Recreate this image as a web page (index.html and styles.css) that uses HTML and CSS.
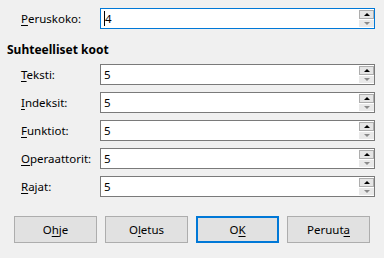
FILE: index.html
```html
<!DOCTYPE html>
<html lang="fi">
<head>
    <meta charset="UTF-8">
    <title>Fonttikoot</title>
    <link rel="stylesheet" href="styles.css">
</head>
<body>
    <div class="dialog">
        <div class="row">
            <label class="label"><u>P</u>eruskoko:</label>
            <div class="spin focused">
                <span class="caret"></span><span class="value">4</span>
                <div class="arrows"><span class="up"></span><span class="down"></span></div>
            </div>
        </div>

        <h3 class="section">Suhteelliset koot</h3>

        <div class="rows">
            <div class="row">
                <label class="label"><u>T</u>eksti:</label>
                <div class="spin"><span class="value">5</span>
                    <div class="arrows"><span class="up"></span><span class="down"></span></div>
                </div>
            </div>
            <div class="row">
                <label class="label"><u>I</u>ndeksit:</label>
                <div class="spin"><span class="value">5</span>
                    <div class="arrows"><span class="up"></span><span class="down"></span></div>
                </div>
            </div>
            <div class="row">
                <label class="label"><u>F</u>unktiot:</label>
                <div class="spin"><span class="value">5</span>
                    <div class="arrows"><span class="up"></span><span class="down"></span></div>
                </div>
            </div>
            <div class="row">
                <label class="label"><u>O</u>peraattorit:</label>
                <div class="spin"><span class="value">5</span>
                    <div class="arrows"><span class="up"></span><span class="down"></span></div>
                </div>
            </div>
            <div class="row">
                <label class="label"><u>R</u>ajat:</label>
                <div class="spin"><span class="value">5</span>
                    <div class="arrows"><span class="up"></span><span class="down"></span></div>
                </div>
            </div>
        </div>

        <div class="buttons">
            <button class="btn">O<u>h</u>je</button>
            <button class="btn">O<u>l</u>etus</button>
            <button class="btn default">O<u>K</u></button>
            <button class="btn">Peruut<u>a</u></button>
        </div>
    </div>
</body>
</html>
```

FILE: styles.css
```css
body {
    margin: 0;
    background: #f0f0f0;
    font-family: 'Noto Sans', 'Open Sans', sans-serif;
    font-size: 11.5px;
    color: #000;
}
.dialog {
    padding: 8px 9px 0 7px;
}
.row {
    display: flex;
    align-items: center;
    padding-left: 14px;
    height: 21px;
}
.rows {
    display: flex;
    flex-direction: column;
    gap: 7px;
}
.label {
    width: 79px;
    line-height: 16px;
}
.label u {
    text-decoration-thickness: 1px;
    text-underline-offset: 2px;
}
.spin {
    flex: 1;
    height: 21px;
    box-sizing: border-box;
    border: 1px solid #7a7a7a;
    background: #fff;
    display: flex;
    align-items: center;
    padding-left: 3px;
}
.spin.focused {
    border-color: #0078d7;
}
.caret {
    width: 1px;
    height: 15px;
    background: #000;
}
.value {
    flex: 1;
    line-height: 16px;
}
.arrows {
    width: 15px;
    align-self: stretch;
    display: flex;
    flex-direction: column;
    padding: 1px 0;
    gap: 1px;
}
.up, .down {
    flex: 1;
    display: flex;
    align-items: center;
    justify-content: center;
    box-sizing: border-box;
}
.up {
    background: #e5e5e5;
    border: 1px solid #adadad;
}
.down {
    background: #e9e9e9;
}
.up::after {
    content: "";
    border-left: 3px solid transparent;
    border-right: 3px solid transparent;
    border-bottom: 3px solid #000;
}
.down::after {
    content: "";
    border-left: 3px solid transparent;
    border-right: 3px solid transparent;
    border-top: 3px solid #8a8a8a;
}
.section {
    margin: 13px 0 6px;
    font-size: 12px;
    font-weight: bold;
    line-height: 16px;
}
.buttons {
    display: flex;
    justify-content: space-between;
    padding: 19px 5px 0 7px;
}
.btn {
    width: 83px;
    height: 27px;
    background: #e1e1e1;
    border: 1px solid #adadad;
    font-family: inherit;
    font-size: 11.5px;
    color: #000;
    padding: 0;
}
.btn.default {
    border: 2px solid #0078d7;
}
.btn u {
    text-underline-offset: 2px;
}
```
